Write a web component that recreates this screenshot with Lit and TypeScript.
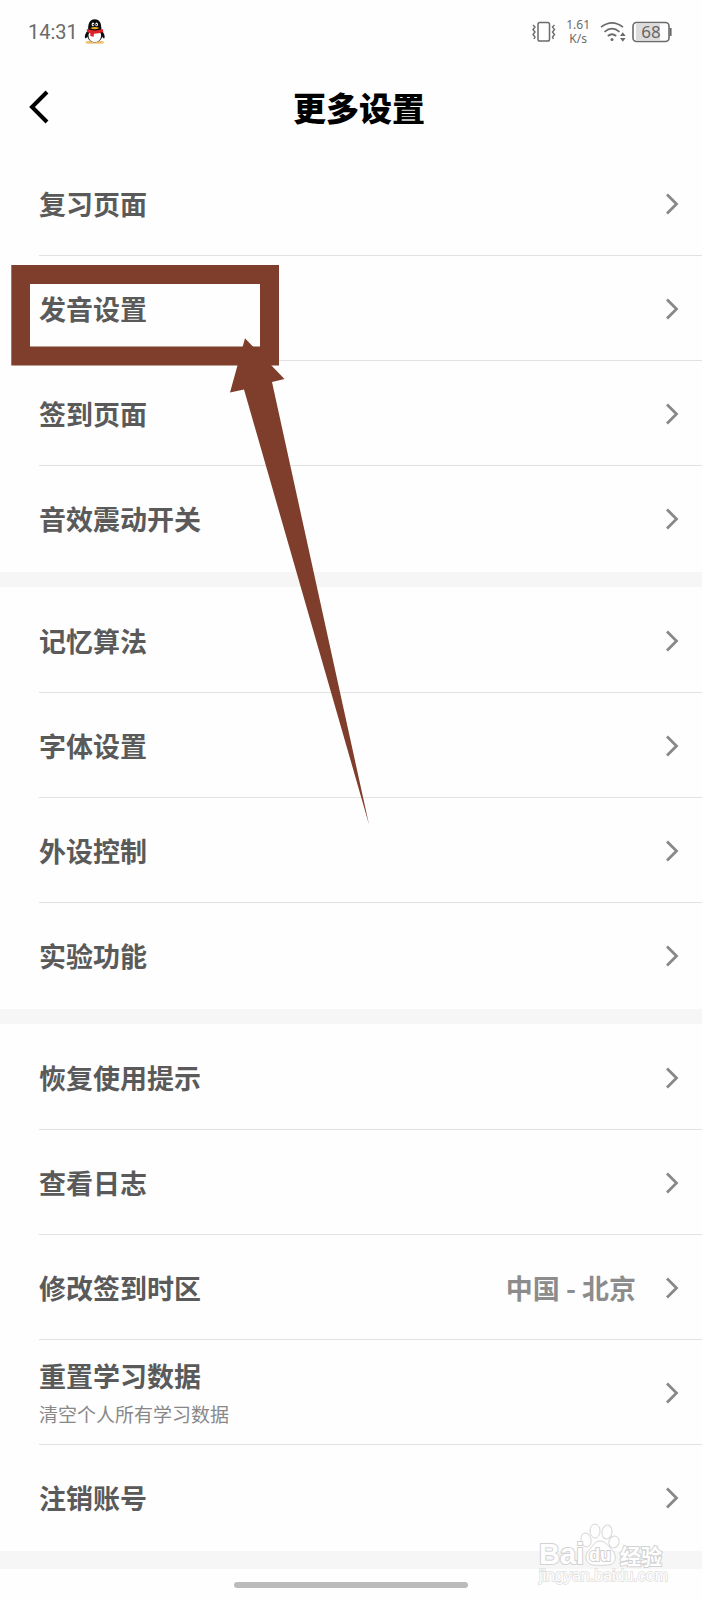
import { LitElement, html, css, svg, nothing } from "lit";
import { customElement, property } from "lit/decorators.js";

interface SettingItem {
  label: string;
  note?: string;
  value?: string;
}

const sections: SettingItem[][] = [
  [
    { label: "复习页面" },
    { label: "发音设置" },
    { label: "签到页面" },
    { label: "音效震动开关" },
  ],
  [
    { label: "记忆算法" },
    { label: "字体设置" },
    { label: "外设控制" },
    { label: "实验功能" },
  ],
  [
    { label: "恢复使用提示" },
    { label: "查看日志" },
    { label: "修改签到时区", value: "中国 - 北京" },
    { label: "重置学习数据", note: "清空个人所有学习数据" },
    { label: "注销账号" },
  ],
];

@customElement("status-bar")
export class StatusBar extends LitElement {
  static styles = css`
    :host {
      display: flex;
      align-items: center;
      justify-content: space-between;
      height: 64px;
      padding: 0 30px 0 28px;
      box-sizing: border-box;
      color: #6b6b6b;
      font-family: Roboto, "Noto Sans", sans-serif;
    }
    .group {
      display: flex;
      align-items: center;
    }
    .time {
      font-size: 20px;
      line-height: 24px;
    }
    .penguin {
      margin-left: 6px;
    }
    .speed {
      display: flex;
      flex-direction: column;
      align-items: center;
      margin: 0 10px;
      font: 12px/14px "Noto Sans", sans-serif;
    }
    .wifi {
      margin-right: 6px;
    }
    .battery {
      display: block;
    }
    svg {
      display: block;
    }
  `;

  render() {
    return html`
      <div class="group">
        <span class="time">14:31</span>
        <svg class="penguin" width="22" height="26" viewBox="0 0 22 26" aria-hidden="true">
          <ellipse cx="6.5" cy="23.2" rx="5" ry="1.5" fill="#eec070" />
          <ellipse cx="15" cy="23.2" rx="5" ry="1.5" fill="#eec070" />
          <path d="M4 11C1.5 14 .3 17 1 19c.6.8 1.6-.3 2.4-1.6M17.5 11c2.5 3 3.700 6 3 8-.6.8-1.600-.3-2.4-1.6" fill="#0b0b0b" />
          <ellipse cx="10.800" cy="15.2" rx="8" ry="8.300" fill="#0b0b0b" />
          <ellipse cx="10.800" cy="17" rx="6.300" ry="6.2" fill="#fff" />
          <path d="M4.200 10C4 3 7 .3 10.800.3S17.600 3 17.300 10c-1 3.500-12 3.500-13.100 0z" fill="#0b0b0b" />
          <ellipse cx="9" cy="5.400" rx="1.300" ry="1.900" fill="#fff" />
          <ellipse cx="12.600" cy="5.400" rx="1.300" ry="1.900" fill="#fff" />
          <circle cx="9.300" cy="5.700" r=".7" />
          <circle cx="12.300" cy="5.700" r=".7" />
          <path d="M6.200 8.900q4.600-1.800 9.200 0-4.600 2.600-9.200 0z" fill="#eeaa22" />
          <path d="M2.800 10q8 2.800 16 0l.5 3q-4.600 1.800-9.500 1.700v3l-3.500-.6v-2.800l-3.300-1.200z" fill="#e0222a" />
        </svg>
      </div>
      <div class="group">
        <svg width="24" height="22" viewBox="0 0 24 22" fill="none" stroke="#6b6b6b" aria-hidden="true">
          <rect x="6" y="1.500" width="11.500" height="18.500" rx="1.800" stroke-width="1.500" />
          <path d="M1 4l2 2-2 2.500 2 2.500-2 2.500 2 2.500-1 2M22.500 4l-2 2 2 2.500-2 2.500 2 2.500-2 2.500 1 2" stroke-width="1.400" />
        </svg>
        <div class="speed"><span>1.61</span><span>K/s</span></div>
        <svg class="wifi" width="26" height="22" viewBox="0 0 26 22" fill="none" stroke="#6b6b6b" stroke-width="1.700" aria-hidden="true">
          <path d="M1 6.200Q12 -2.500 23 6.200M4.500 10.800Q12 4.500 19.500 10.800M7.800 15Q12 11.500 16.200 15" />
          <circle cx="12" cy="18.600" r="1.500" fill="#6b6b6b" stroke="none" />
          <path d="M20 15l2.800-3.800 2.800 3.800zM20 17l2.800 3.800 2.800-3.800z" fill="#6b6b6b" stroke="none" />
        </svg>
        <svg class="battery" width="40" height="22" viewBox="0 0 40 22" role="img" aria-label="68%">
          <rect x="4" y="3" width="24" height="16" fill="#dcdcdc" />
          <rect x="1" y="1.500" width="36" height="19" rx="3.500" fill="none" stroke="#6b6b6b" stroke-width="1.600" />
          <path d="M38.600 7v8" stroke="#6b6b6b" stroke-width="2" />
          <text x="19" y="17" text-anchor="middle" font-size="17" font-family="Noto Sans, sans-serif" fill="#666">68</text>
        </svg>
      </div>
    `;
  }
}

@customElement("setting-row")
export class SettingRow extends LitElement {
  @property({ attribute: false }) item!: SettingItem;

  static styles = css`
    :host {
      display: block;
      padding-left: 39px;
    }
    .row {
      display: flex;
      align-items: center;
      width: 100%;
      height: 105px;
      box-sizing: border-box;
      margin: 0;
      padding: 2px 23px 0 0;
      border: 0;
      border-bottom: 1px solid #e2e2e2;
      background: none;
      color: #5a5a5a;
      font-family: "Noto Sans CJK SC", sans-serif;
      text-align: left;
      cursor: pointer;
    }
    :host([last]) .row {
      border-bottom-color: transparent;
    }
    .text {
      display: flex;
      flex: 1;
      flex-direction: column;
      gap: 6px;
    }
    .label {
      font-size: 27px;
      line-height: 36px;
      font-weight: 700;
    }
    .note {
      color: #888;
      font-size: 19px;
      line-height: 28px;
    }
    .value {
      margin-right: 29px;
      color: #8c8c8c;
      font-size: 27px;
      line-height: 36px;
      font-weight: 700;
    }
    .chevron {
      display: block;
    }
  `;

  render() {
    const { label, note, value } = this.item;
    return html`
      <button class="row" type="button">
        <span class="text">
          <span class="label">${label}</span>
          ${note ? html`<span class="note">${note}</span>` : nothing}
        </span>
        ${value ? html`<span class="value">${value}</span>` : nothing}
        <svg class="chevron" width="14" height="22" viewBox="0 0 14 22" fill="none" stroke="#888" stroke-width="2.800" aria-hidden="true">
          <path d="M2 1.500l9.500 9.500L2 20.500" />
        </svg>
      </button>
    `;
  }
}

@customElement("app-root")
export class AppRoot extends LitElement {
  static styles = css`
    :host {
      display: block;
      position: relative;
      min-height: 100vh;
      overflow: hidden;
      background: #fefefe;
      font-family: "Noto Sans CJK SC", sans-serif;
    }
    .header {
      display: grid;
      grid-template-columns: 80px 1fr 80px;
      align-items: center;
      height: 86px;
    }
    .back {
      justify-self: start;
      margin: 0;
      padding: 0 0 0 28px;
      border: 0;
      background: none;
      cursor: pointer;
    }
    .back svg {
      display: block;
    }
    .title {
      margin: 0;
      padding-left: 16px;
      color: #000;
      font-size: 33px;
      line-height: 44px;
      font-weight: 900;
      text-align: center;
    }
    .section {
      padding: 1px 0;
      border-bottom: 15px solid #f6f6f6;
    }
    .section:last-child {
      border-bottom-width: 18px;
    }
    .footer {
      display: flex;
      justify-content: center;
      padding: 13px 0 12px;
    }
    .handle {
      width: 234px;
      height: 6px;
      border-radius: 3px;
      background: #bbb;
    }
    .markup {
      position: absolute;
      top: 0;
      left: 0;
      pointer-events: none;
    }
    .watermark {
      position: absolute;
      right: 28px;
      bottom: 8px;
      overflow: visible;
      pointer-events: none;
    }
  `;

  private renderWatermark() {
    return svg`
      <g fill="#fefefe" stroke="#d6d6d6" stroke-width="1">
        <ellipse cx="47" cy="16" rx="5" ry="7" transform="rotate(-12 47 16)" />
        <ellipse cx="56" cy="7" rx="5" ry="7" />
        <ellipse cx="68" cy="8" rx="5" ry="7" transform="rotate(8 68 8)" />
        <ellipse cx="75" cy="18" rx="5" ry="6" transform="rotate(20 75 18)" />
        <path d="M61 17c-5 0-7 5-11 9-5 5-4 14 4 15 4 .4 11 .4 16 0 7-1 8-9 4-14-4-4-7-10-13-10z" />
      </g>
      <g fill="#fefefe" stroke="#d2d2d2" stroke-width="2" paint-order="stroke" font-weight="700" font-family="Liberation Sans, sans-serif">
        <text x="0" y="40" font-size="29">Bai</text>
        <text x="50" y="37" font-size="18">du</text>
        <text x="81" y="40" font-size="21" font-family="Noto Sans CJK SC, sans-serif">经验</text>
      </g>
      <text x="0" y="57" font-size="16" fill="#fefefe" stroke="#dedede" stroke-width="1.500" paint-order="stroke" font-family="Liberation Sans, sans-serif">jingyan.baidu.com</text>
    `;
  }

  render() {
    return html`
      <status-bar></status-bar>
      <header class="header">
        <button class="back" type="button" aria-label="返回">
          <svg width="22" height="34" viewBox="0 0 22 34" fill="none" stroke="#000" stroke-width="4" aria-hidden="true">
            <path d="M19 2L4 17l15 15" />
          </svg>
        </button>
        <h1 class="title">更多设置</h1>
      </header>
      <main>
        ${sections.map(
          (items) => html`
            <section class="section">
              ${items.map(
                (item, i) => html`<setting-row .item=${item} ?last=${i === items.length - 1}></setting-row>`
              )}
            </section>
          `
        )}
      </main>
      <footer class="footer"><div class="handle"></div></footer>
      <svg class="markup" width="380" height="840" viewBox="0 0 380 840" fill="#7f3e2b" aria-hidden="true">
        <path fill-rule="evenodd" d="M11.300 265H279v100.500H11.300zM30 284v62.500h230V284z" />
        <path d="M245 338.300L284.500 379 272 382 369 824.500 244 389.500 230 392.500z" />
      </svg>
      <svg class="watermark" width="140" height="68" viewBox="-5 0 140 68" role="img" aria-label="Baidu 经验">
        ${this.renderWatermark()}
      </svg>
    `;
  }
}
